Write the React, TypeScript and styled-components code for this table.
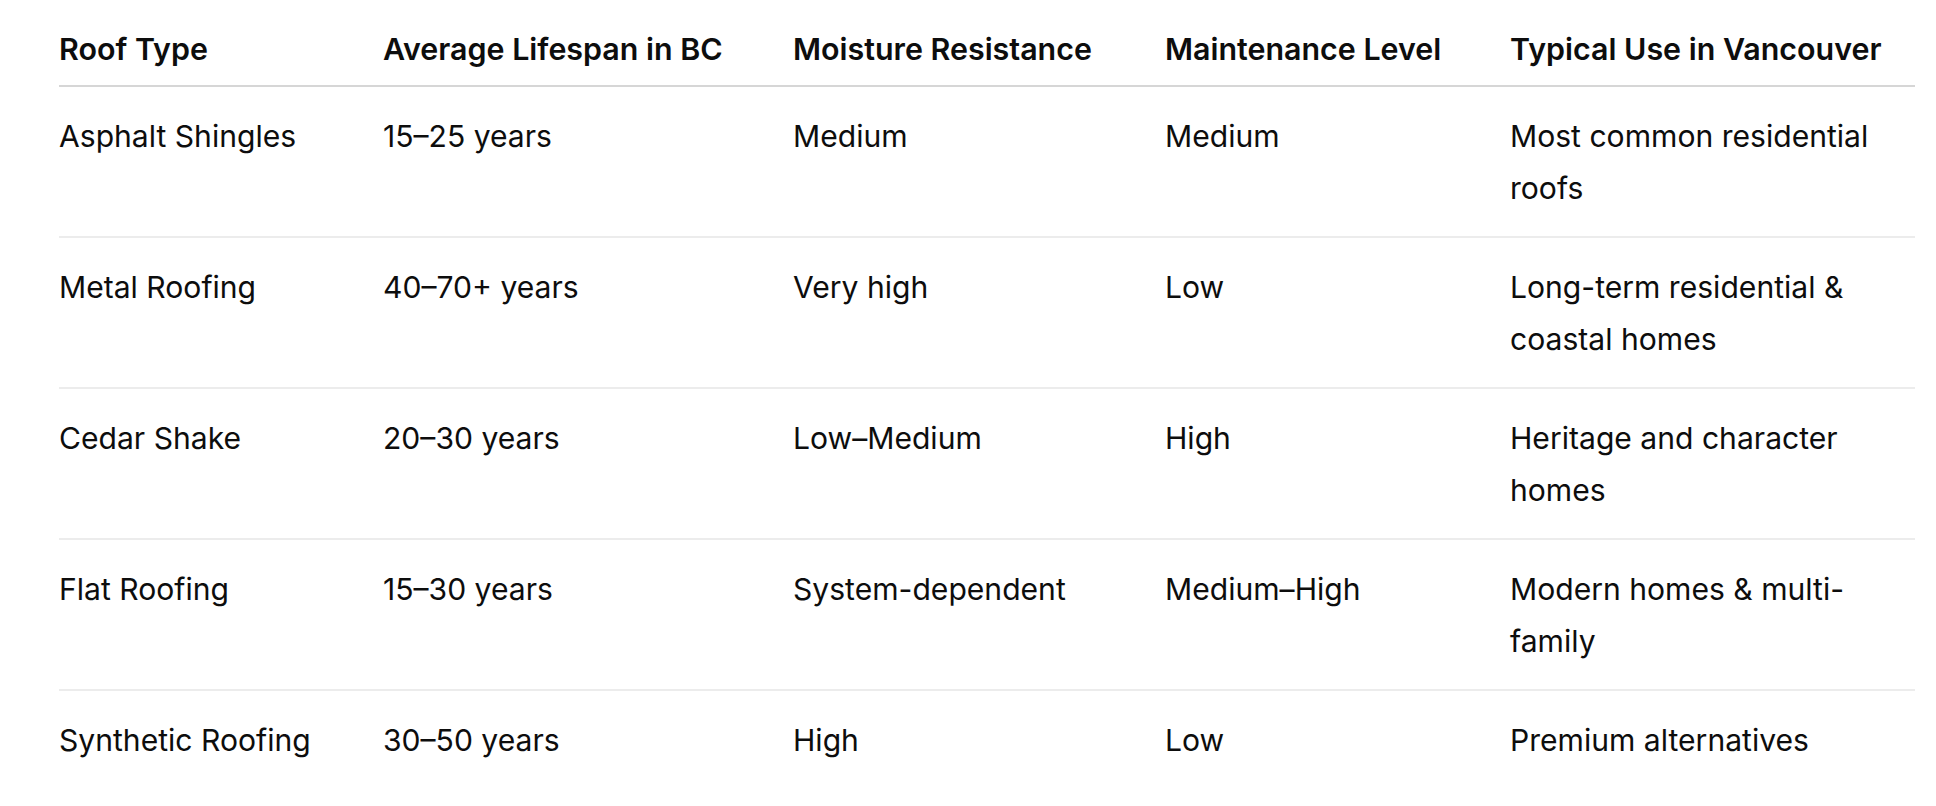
import React from "react";
import styled, { createGlobalStyle } from "styled-components";

const GlobalStyle = createGlobalStyle`
  html, body {
    margin: 0;
    padding: 0;
    background: #ffffff;
  }
  body {
    font-family: Inter, "Noto Sans", "Liberation Sans", sans-serif;
    color: #0d0d0d;
    -webkit-font-smoothing: antialiased;
  }
`;

const Page = styled.div`
  padding: 0 21px 0 59px;
`;

const Table = styled.table`
  width: 1856px;
  border-collapse: collapse;
  table-layout: fixed;
  font-size: 30.1px;
  line-height: 52.5px;
`;

const Col = styled.col<{ $w: number }>`
  width: ${(p) => p.$w}px;
`;

const HeadCell = styled.th`
  text-align: left;
  font-weight: 600;
  font-size: 30.4px;
  padding: 23px 30px 9px 0;
  border-bottom: 2px solid #d6d6d6;
  white-space: nowrap;
  vertical-align: bottom;
`;

const Row = styled.tr`
  border-bottom: 2px solid #ececec;
  &:last-child {
    border-bottom: none;
  }
`;

const Cell = styled.td`
  padding: 23px 30px 21px 0;
  vertical-align: top;
  font-weight: 400;
`;

const columns = [
  { title: "Roof Type", w: 324 },
  { title: "Average Lifespan in BC", w: 410 },
  { title: "Moisture Resistance", w: 372 },
  { title: "Maintenance Level", w: 345 },
  { title: "Typical Use in Vancouver", w: 405 },
];

const rows: string[][] = [
  ["Asphalt Shingles", "15–25 years", "Medium", "Medium", "Most common residential roofs"],
  ["Metal Roofing", "40–70+ years", "Very high", "Low", "Long-term residential & coastal homes"],
  ["Cedar Shake", "20–30 years", "Low–Medium", "High", "Heritage and character homes"],
  ["Flat Roofing", "15–30 years", "System-dependent", "Medium–High", "Modern homes & multi-family"],
  ["Synthetic Roofing", "30–50 years", "High", "Low", "Premium alternatives"],
];

export default function App() {
  return (
    <>
      <GlobalStyle />
      <Page>
        <Table>
          <colgroup>
            {columns.map((c) => (
              <Col key={c.title} $w={c.w} />
            ))}
          </colgroup>
          <thead>
            <tr>
              {columns.map((c) => (
                <HeadCell key={c.title}>{c.title}</HeadCell>
              ))}
            </tr>
          </thead>
          <tbody>
            {rows.map((r) => (
              <Row key={r[0]}>
                {r.map((v, i) => (
                  <Cell key={i}>{v}</Cell>
                ))}
              </Row>
            ))}
          </tbody>
        </Table>
      </Page>
    </>
  );
}
